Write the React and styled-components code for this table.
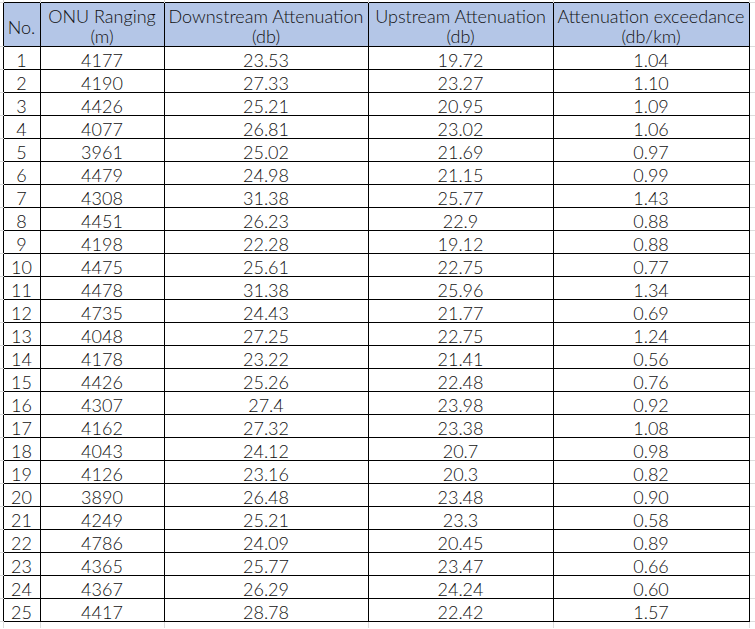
import React from "react";
import styled, { createGlobalStyle } from "styled-components";

const rows = [
    [1, 4177, "23.53", "19.72", "1.04"],
    [2, 4190, "27.33", "23.27", "1.10"],
    [3, 4426, "25.21", "20.95", "1.09"],
    [4, 4077, "26.81", "23.02", "1.06"],
    [5, 3961, "25.02", "21.69", "0.97"],
    [6, 4479, "24.98", "21.15", "0.99"],
    [7, 4308, "31.38", "25.77", "1.43"],
    [8, 4451, "26.23", "22.9", "0.88"],
    [9, 4198, "22.28", "19.12", "0.88"],
    [10, 4475, "25.61", "22.75", "0.77"],
    [11, 4478, "31.38", "25.96", "1.34"],
    [12, 4735, "24.43", "21.77", "0.69"],
    [13, 4048, "27.25", "22.75", "1.24"],
    [14, 4178, "23.22", "21.41", "0.56"],
    [15, 4426, "25.26", "22.48", "0.76"],
    [16, 4307, "27.4", "23.98", "0.92"],
    [17, 4162, "27.32", "23.38", "1.08"],
    [18, 4043, "24.12", "20.7", "0.98"],
    [19, 4126, "23.16", "20.3", "0.82"],
    [20, 3890, "26.48", "23.48", "0.90"],
    [21, 4249, "25.21", "23.3", "0.58"],
    [22, 4786, "24.09", "20.45", "0.89"],
    [23, 4365, "25.77", "23.47", "0.66"],
    [24, 4367, "26.29", "24.24", "0.60"],
    [25, 4417, "28.78", "22.42", "1.57"],
];

const columns = [
    { width: 37, title: "No." },
    { width: 124, title: "ONU Ranging", unit: "(m)" },
    { width: 204, title: "Downstream Attenuation", unit: "(db)" },
    { width: 185, title: "Upstream Attenuation", unit: "(db)" },
    { width: 196, title: "Attenuation exceedance", unit: "(db/km)" },
];

// faint spreadsheet grid around the bordered table
const GapRow = ({ bottom }) => (
    <tr>
        <Corner />
        {columns.map((c) => (
            <GapCell key={c.title} $bottom={bottom} />
        ))}
        <Corner />
    </tr>
);

const App = () => {
    return (
        <>
            <GlobalStyle />
            <Table>
                <colgroup>
                    <Col $w={3} />
                    {columns.map((c) => (
                        <Col key={c.title} $w={c.width} />
                    ))}
                    <Col $w={6} />
                </colgroup>
                <tbody>
                    <GapRow />
                    <tr>
                        <SideCell />
                        {columns.map((c) => (
                            <HeadCell key={c.title} $single={!c.unit}>
                                {c.title}
                                {c.unit && <br />}
                                {c.unit}
                            </HeadCell>
                        ))}
                        <SideCell />
                    </tr>
                    {rows.map((r) => (
                        <tr key={r[0]}>
                            <SideCell />
                            {r.map((v, i) => (
                                <Cell key={i}>{v}</Cell>
                            ))}
                            <SideCell />
                        </tr>
                    ))}
                    <GapRow bottom />
                </tbody>
            </Table>
        </>
    );
};

export default App;

const GlobalStyle = createGlobalStyle`
    html, body {
        margin: 0;
        padding: 0;
        background: #ffffff;
        overflow: hidden;
    }
    body {
        font-family: "Lato", "Noto Sans", sans-serif;
        color: #111;
    }
`;

const Table = styled.table`
    border-collapse: collapse;
    table-layout: fixed;
    width: 755px;
`;

const Col = styled.col`
    width: ${(p) => p.$w}px;
`;

const GapCell = styled.td`
    height: ${(p) => (p.$bottom ? 6 : 2)}px;
    padding: 0;
    border-left: 1px solid #dcdcdc;
    border-right: 1px solid #dcdcdc;
`;

const Corner = styled.td`
    padding: 0;
`;

const SideCell = styled.td`
    padding: 0;
    border-top: 1px solid #dcdcdc;
    border-bottom: 1px solid #dcdcdc;
`;

const HeadCell = styled.th`
    box-sizing: border-box;
    height: 43px;
    padding: ${(p) => (p.$single ? "5px 0 0" : "3px 0 0")};
    background: #b4c6e7;
    border: 1px solid #000;
    font-weight: 300;
    font-size: 18px;
    line-height: 20px;
    text-align: center;
    vertical-align: ${(p) => (p.$single ? "middle" : "top")};
    white-space: nowrap;
    color: #111;
`;

const Cell = styled.td`
    box-sizing: border-box;
    height: 22px;
    padding: 5px 0 0;
    border: 1px solid #000;
    font-size: 18px;
    font-weight: 300;
    line-height: 17px;
    text-align: center;
    vertical-align: top;
    white-space: nowrap;
    color: #111;
`;
